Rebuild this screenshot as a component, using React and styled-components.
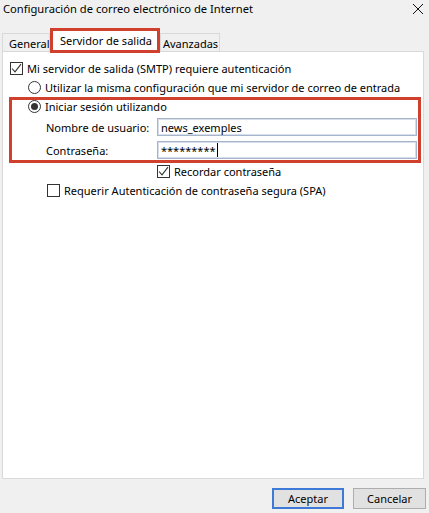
import React from "react";
import styled, { createGlobalStyle } from "styled-components";

const Global = createGlobalStyle`
  html, body { margin: 0; padding: 0; background: #f0f0f0; }
  body { font-family: "Noto Sans", "Liberation Sans", sans-serif; font-size: 11px; color: #000; }
  * { box-sizing: border-box; }
`;

const Window = styled.div`
  width: 429px;
  height: 513px;
  display: flex;
  flex-direction: column;
  background: #f0f0f0;
  overflow: hidden;
`;

const TitleBar = styled.div`
  height: 28px;
  display: flex;
  justify-content: space-between;
  align-items: flex-start;
  padding: 1px 6px 0 3px;
`;

const Title = styled.span`
  line-height: 16px;
  font-size: 11.2px;
`;

const Close = styled.svg`
  margin-top: 3px;
  width: 10px;
  height: 10px;
`;

const TabRow = styled.div`
  height: 23px;
  display: flex;
  align-items: flex-end;
  padding-left: 2px;
`;

const Tab = styled.div`
  width: ${(p) => p.$w}px;
  height: ${(p) => (p.$active ? 25 : 18)}px;
  margin-bottom: ${(p) => (p.$active ? -2 : 0)}px;
  position: relative;
  z-index: ${(p) => (p.$active ? 2 : 0)};
  display: flex;
  align-items: center;
  padding-left: ${(p) => p.$pl}px;
  background: ${(p) => (p.$active ? "#fff" : "#f0f0f0")};
  border: ${(p) => (p.$active ? "3px solid #d0402c" : "1px solid #d9d9d9")};
  border-bottom: ${(p) => (p.$active ? "3px solid #d0402c" : "none")};
  white-space: nowrap;
  padding-top: ${(p) => (p.$active ? 0 : 1)}px;
`;

const Panel = styled.div`
  margin: 0 5px 0 2px;
  height: 428px;
  background: #fff;
  border: 1px solid #d9d9d9;
  display: flex;
  flex-direction: column;
  align-items: flex-start;
`;

const Row = styled.div`
  display: flex;
  align-items: center;
  gap: 4px;
  height: ${(p) => p.$h || 18}px;
  margin-top: ${(p) => p.$mt || 0}px;
  margin-left: ${(p) => p.$ml || 0}px;
  white-space: nowrap;
`;

const Box = styled.span`
  width: 13px;
  height: 13px;
  border: 1px solid #333;
  background: #fff;
  display: inline-flex;
  align-items: center;
  justify-content: center;
  flex: none;
`;

const Radio = styled.span`
  width: 13px;
  height: 13px;
  border: 1px solid #333;
  border-radius: 50%;
  background: #fff;
  display: inline-flex;
  align-items: center;
  justify-content: center;
  flex: none;
  &::after {
    content: "";
    display: ${(p) => (p.$on ? "block" : "none")};
    width: 7px;
    height: 7px;
    border-radius: 50%;
    background: #333;
  }
`;

const RedBox = styled.div`
  margin: 1px 0 0 6px;
  width: 412px;
  height: 66px;
  border: 3px solid #d0402c;
  display: flex;
  flex-direction: column;
`;

const FieldRow = styled.div`
  display: flex;
  align-items: center;
  margin: 5px 0 0 34px;
  height: 18px;
`;

const Label = styled.span`
  width: 111px;
  flex: none;
  white-space: nowrap;
`;

const Input = styled.div`
  width: 260px;
  height: 18px;
  border: 1px solid #a6b4cc;
  box-shadow: inset 0 0 0 1px #d7deea;
  background: #fff;
  padding: 0 3px;
  display: flex;
  align-items: center;
  white-space: nowrap;
`;

const Caret = styled.span`
  display: inline-block;
  width: 1px;
  height: 14px;
  background: #000;
  margin-left: 1px;
`;

const Footer = styled.div`
  display: flex;
  justify-content: flex-end;
  gap: 9px;
  padding: 9px 3px 0 0;
`;

const Button = styled.button`
  width: ${(p) => p.$w}px;
  height: 21px;
  font: inherit;
  color: #000;
  background: #e1e1e1;
  border: ${(p) => (p.$default ? "2px solid #3d7ad8" : "1px solid #adadad")};
  padding: 0;
  line-height: 1;
`;

const Check = () => (
  <svg width="11" height="11" viewBox="0 0 11 11">
    <path d="M1 5.5 L4 8.8 L10 1.2" fill="none" stroke="#333" strokeWidth="1.1" />
  </svg>
);

export default function App() {
  return (
    <Window>
      <Global />
      <TitleBar>
        <Title>Configuración de correo electrónico de Internet</Title>
        <Close viewBox="0 0 10 10">
          <path d="M0 0 L10 10 M10 0 L0 10" stroke="#111" strokeWidth="1" />
        </Close>
      </TitleBar>
      <TabRow>
        <Tab $w={48} $pl={6}>General</Tab>
        <Tab $w={110} $pl={7} $active>Servidor de salida</Tab>
        <Tab $w={60} $pl={2}>Avanzadas</Tab>
      </TabRow>
      <Panel>
        <Row $mt={7} $ml={7}>
          <Box><Check /></Box>
          <span>Mi servidor de salida (SMTP) requiere autenticación</span>
        </Row>
        <Row $mt={1} $ml={25}>
          <Radio />
          <span>Utilizar la misma configuración que mi servidor de correo de entrada</span>
        </Row>
        <RedBox>
          <Row $h={13} $ml={16}>
            <Radio $on />
            <span>Iniciar sesión utilizando</span>
          </Row>
          <FieldRow>
            <Label>Nombre de usuario:</Label>
            <Input>news_exemples</Input>
          </FieldRow>
          <FieldRow>
            <Label>Contraseña:</Label>
            <Input>*********<Caret /></Input>
          </FieldRow>
        </RedBox>
        <Row $h={16} $ml={154}>
          <Box><Check /></Box>
          <span>Recordar contraseña</span>
        </Row>
        <Row $h={16} $mt={3} $ml={44}>
          <Box />
          <span>Requerir Autenticación de contraseña segura (SPA)</span>
        </Row>
      </Panel>
      <Footer>
        <Button $w={72} $default>Aceptar</Button>
        <Button $w={73}>Cancelar</Button>
      </Footer>
    </Window>
  );
}
